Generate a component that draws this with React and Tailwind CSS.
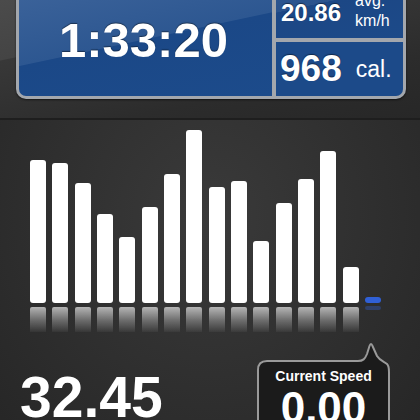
import React from "react";

const bars = [143, 140, 120, 89, 66, 96, 129, 173, 116, 122, 62, 100, 124, 152, 36];

export default function App() {
  return (
    <div className="w-[420px] h-[420px] overflow-hidden bg-[#2a2a2a] font-['Liberation_Sans',Arial,sans-serif] text-white flex flex-col">
      {/* Top stats section */}
      <div className="h-[120px] shrink-0 flex flex-col bg-[linear-gradient(168deg,#4b4b4b_0%,#444444_29%,#383838_29.5%,#2c2c2c_70%,#272727_100%)] border-b-2 border-[#1e1e1e]">
        <div className="ml-[16px] mt-[-12px] w-[390px] h-[111px] shrink-0 bg-[#a3a7ad] p-[3px] rounded-b-[10px] flex gap-[4px] shadow-[0_1px_2px_rgba(0,0,0,0.6)]">
          <div className="w-[253px] h-full rounded-bl-[7px] bg-[linear-gradient(168deg,#3c639a_0%,#2d5791_47%,#1b4887_47.6%,#1c4b8b_100%)] pl-[40px] pt-[25px]">
            <div className="text-[49px] font-bold leading-none [text-shadow:0_-1px_1px_rgba(0,0,0,0.45)]">1:33:20</div>
          </div>
          <div className="flex-1 flex flex-col gap-[4px]">
            <div className="h-[47px] shrink-0 flex items-start bg-[linear-gradient(168deg,#2e5790_0%,#2a538d_29%,#1c4785_29.6%,#1c4a89_100%)] pl-[5px]">
              <div className="pt-[10px] text-[24px] font-bold leading-none [text-shadow:0_-1px_1px_rgba(0,0,0,0.45)]">20.86</div>
              <div className="ml-[14px] text-[16px] leading-[20px]">
                <div>avg.</div>
                <div>km/h</div>
              </div>
            </div>
            <div className="flex-1 rounded-br-[7px] bg-[#1c4a89] flex items-start pl-[4px]">
              <div className="pt-[8px] text-[37px] font-bold leading-none [text-shadow:0_-1px_1px_rgba(0,0,0,0.45)]">968</div>
              <div className="ml-[14px] pt-[16px] text-[23px] leading-none">cal.</div>
            </div>
          </div>
        </div>
      </div>

      {/* Chart + bottom */}
      <div className="flex-1 flex flex-col bg-[radial-gradient(ellipse_at_50%_30%,#3a3a3a_0%,#303030_50%,#262626_100%)]">
        <div className="h-[218px] shrink-0 flex pl-[30px] gap-[6.33px]">
          {bars.map((h, i) => (
            <div key={i} className="w-[16px] flex flex-col">
              <div className="h-[183px] flex items-end">
                <div className="w-full bg-white rounded-[3px]" style={{ height: h }} />
              </div>
              <div className="h-[4px]" />
              <div className="h-[25px] rounded-t-[2px] bg-[linear-gradient(to_bottom,rgba(255,255,255,0.64),rgba(255,255,255,0.28)_55%,rgba(255,255,255,0.04))]" />
            </div>
          ))}
          <div className="w-[16px] flex flex-col">
            <div className="h-[183px] flex items-end">
              <div className="w-full h-[6px] bg-[#3060d6] rounded-full" />
            </div>
            <div className="h-[3px]" />
            <div className="h-[4px] rounded-full bg-[rgba(48,96,214,0.35)]" />
          </div>
        </div>

        <div className="flex justify-between items-start">
          <div className="pl-[20px] pt-[31px] text-[57px] font-bold leading-none">32.45</div>
          <div className="relative mt-[22px] mr-[30px] w-[133px] h-[80px] shrink-0">
            <svg className="absolute left-0 top-[-20px]" width="133" height="100" viewBox="0 0 133 100">
              <path
                d="M1,100 L1,30 Q1,21 10,21 L101,21 C106,21 108,19 110,14 L112.5,6 Q114,2 115.5,6 L120,16 C123,21 128,22 130,24 Q132,26 132,32 L132,100 Z"
                fill="#1b1b1b"
                stroke="#9a9a9a"
                strokeWidth="2"
              />
            </svg>
            <div className="relative flex flex-col items-center pt-[9px]">
              <div className="text-[14px] font-bold leading-none">Current Speed</div>
              <div className="mt-[3px] text-[44px] font-bold leading-none">0.00</div>
            </div>
          </div>
        </div>
      </div>
    </div>
  );
}
